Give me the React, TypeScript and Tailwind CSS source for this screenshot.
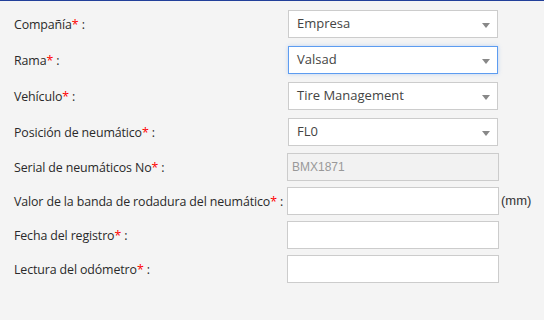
import React from "react";

const Arrow = () => (
  <svg width="8" height="5" viewBox="0 0 8 5" className="absolute right-[7px] top-[12px]">
    <path d="M0 0 L8 0 L4 5 Z" fill="#888" />
  </svg>
);

const Label = ({ text }: { text: string }) => (
  <div className="w-[273px] shrink-0 whitespace-nowrap pt-[2px] text-[12.4px] tracking-[-0.12px] text-[#2a2a2a]">
    {text}
    <span className="text-[#ff0000]">*</span> :
  </div>
);

const Select = ({ value, focus }: { value: string; focus?: boolean }) => (
  <div
    className={
      focus
        ? "relative ml-px flex h-[28px] w-[210px] items-center border border-[#5d9cf0] bg-white pl-[8px] text-[13px] text-[#444] shadow-[0_0_4px_rgba(90,150,240,0.35)]"
        : "relative ml-px flex h-[28px] w-[210px] items-center border border-[#cccccc] bg-white pl-[8px] text-[13px] text-[#444]"
    }
  >
    {value}
    <Arrow />
  </div>
);

export default function App() {
  return (
    <div
      className="h-[320px] w-[544px] border-t border-[#22409a] bg-[#f4f4f4]"
      style={{ fontFamily: '"Open Sans", sans-serif' }}
    >
      <div className="flex flex-col pl-[14px] pt-[9px]">
        <div className="flex items-center">
          <Label text="Compañía" />
          <Select value="Empresa" />
        </div>
        <div className="mt-[8px] flex items-center">
          <Label text="Rama" />
          <Select value="Valsad" focus />
        </div>
        <div className="mt-[8px] flex items-center">
          <Label text="Vehículo" />
          <Select value="Tire Management" />
        </div>
        <div className="mt-[8px] flex items-center">
          <Label text="Posición de neumático" />
          <Select value="FL0" />
        </div>
        <div className="mt-[7px] flex items-center">
          <Label text="Serial de neumáticos No" />
          <div
            className="flex h-[28px] w-[212px] items-center border border-[#cccccc] bg-[#f2f2f2] pl-[4px] text-[12px] text-[#999]"
            style={{ fontFamily: '"Liberation Sans", Arial, sans-serif' }}
          >
            BMX1871
          </div>
        </div>
        <div className="mt-[6px] flex items-center">
          <Label text="Valor de la banda de rodadura del neumático" />
          <div className="h-[28px] w-[212px] shrink-0 border border-[#cccccc] bg-white" />
          <span
            className="ml-[2px] text-[13px] text-[#333]"
            style={{ fontFamily: '"Liberation Sans", Arial, sans-serif' }}
          >
            (mm)
          </span>
        </div>
        <div className="mt-[6px] flex items-center">
          <Label text="Fecha del registro" />
          <div className="h-[28px] w-[212px] border border-[#cccccc] bg-white" />
        </div>
        <div className="mt-[6px] flex items-center">
          <Label text="Lectura del odómetro" />
          <div className="h-[28px] w-[212px] border border-[#cccccc] bg-white" />
        </div>
      </div>
    </div>
  );
}
